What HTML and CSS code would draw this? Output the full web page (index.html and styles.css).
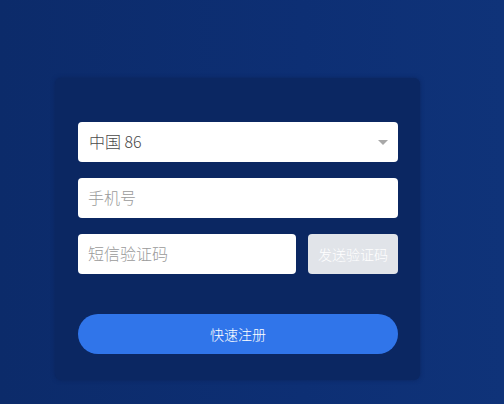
FILE: index.html
```html
<!DOCTYPE html>
<html lang="zh-CN">
<head>
<meta charset="utf-8">
<title>快速注册</title>
<link rel="stylesheet" href="styles.css">
</head>
<body>
<div class="page">
  <form class="card">
    <div class="field select">
      <span class="value">中国 86</span>
      <span class="caret"></span>
    </div>
    <div class="field">
      <span class="placeholder">手机号</span>
    </div>
    <div class="code-row">
      <div class="field code">
        <span class="placeholder">短信验证码</span>
      </div>
      <button type="button" class="send">发送验证码</button>
    </div>
    <button type="button" class="submit">快速注册</button>
  </form>
</div>
</body>
</html>
```
FILE: styles.css
```css
html, body {
  margin: 0;
  padding: 0;
}
body {
  font-family: "Noto Sans CJK SC", "Liberation Sans", sans-serif;
  background: linear-gradient(90deg, #0c2b6a 0%, #0d2f74 60%, #0f3379 100%);
  width: 504px;
  height: 404px;
  overflow: hidden;
}
.page {
  padding: 78px 0 0 55px;
}
.card {
  box-sizing: border-box;
  width: 365px;
  height: 302px;
  margin: 0;
  padding: 44px 22px 0 23px;
  background: #0b2762;
  border-radius: 6px;
  box-shadow: 0 0 4px rgba(8, 30, 80, 0.6);
  display: flex;
  flex-direction: column;
  gap: 16px;
}
.field {
  box-sizing: border-box;
  height: 40px;
  background: #fff;
  border-radius: 4px;
  display: flex;
  align-items: center;
  padding: 0 11px 2px;
  font-size: 16px;
  font-weight: 300;
  line-height: 20px;
}
.select {
  justify-content: space-between;
  padding-right: 10px;
}
.value {
  color: #4a4a4a;
}
.placeholder {
  color: #9a9a9a;
  margin-left: -1px;
}
.caret {
  width: 0;
  height: 0;
  border-left: 5px solid transparent;
  border-right: 5px solid transparent;
  border-top: 5px solid #a8a8a8;
  margin-top: 2px;
}
.code-row {
  display: flex;
  gap: 12px;
}
.code {
  width: 218px;
}
.send {
  width: 90px;
  height: 40px;
  border: 0;
  border-radius: 4px;
  background: #e1e4e9;
  color: #fff;
  font-family: inherit;
  font-size: 14px;
  font-weight: 300;
  padding: 0;
}
.submit {
  margin-top: 24px;
  height: 40px;
  border: 0;
  border-radius: 20px;
  background: #3075ea;
  color: #fff;
  font-family: inherit;
  font-size: 14px;
  font-weight: 300;
  padding: 0;
}
```
